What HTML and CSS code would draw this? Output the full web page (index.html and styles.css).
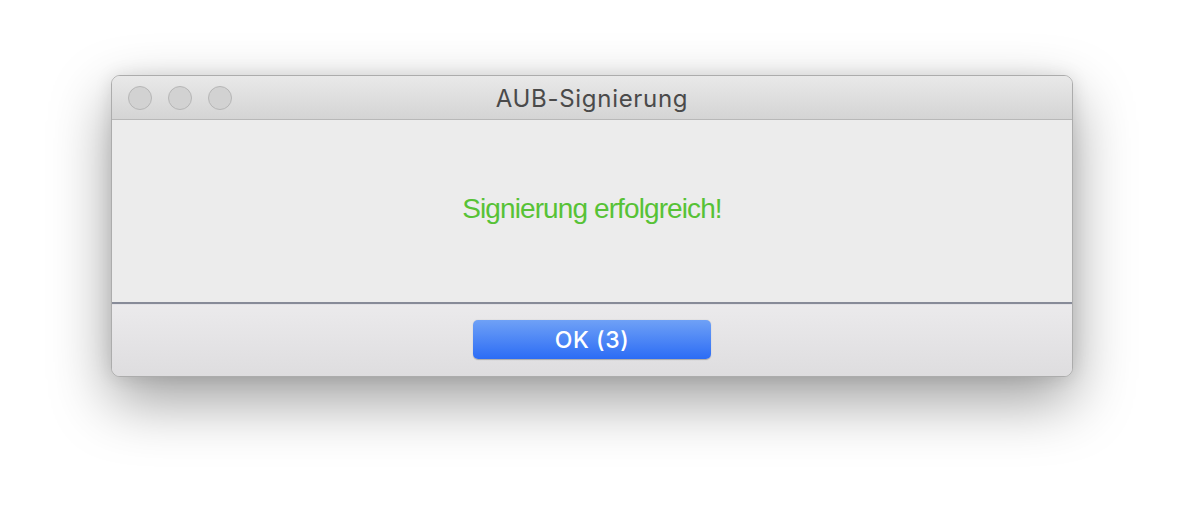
FILE: index.html
```html
<!DOCTYPE html>
<html lang="de">
<head>
<meta charset="utf-8">
<title>AUB-Signierung</title>
<link rel="stylesheet" href="styles.css">
</head>
<body>
<div class="stage">
  <div class="window">
    <div class="titlebar">
      <div class="lights">
        <span class="light"></span>
        <span class="light"></span>
        <span class="light"></span>
      </div>
      <div class="title">AUB-Signierung</div>
      <div class="spacer"></div>
    </div>
    <div class="content">
      <p class="message">Signierung erfolgreich!</p>
    </div>
    <div class="footer">
      <button class="ok">OK (3)</button>
    </div>
  </div>
</div>
</body>
</html>
```

FILE: styles.css
```css
html, body {
  margin: 0;
  padding: 0;
  background: #ffffff;
  width: 1184px;
  height: 524px;
  overflow: hidden;
}

.stage {
  display: flex;
  justify-content: center;
  padding-top: 75px;
}

.window {
  width: 962px;
  height: 302px;
  box-sizing: border-box;
  border: 1px solid #acacac;
  border-radius: 9px;
  overflow: hidden;
  display: flex;
  flex-direction: column;
  box-shadow: 0 24px 60px rgba(0, 0, 0, 0.38), 0 0 18px rgba(0, 0, 0, 0.10);
  background: #ececec;
}

.titlebar {
  height: 43px;
  flex: none;
  display: grid;
  grid-template-columns: 1fr auto 1fr;
  align-items: center;
  background: linear-gradient(#e9e9e9, #d4d4d4);
  border-bottom: 1px solid #b8b8b8;
}

.lights {
  display: flex;
  gap: 16px;
  padding-left: 16px;
}

.light {
  width: 22px;
  height: 22px;
  border-radius: 50%;
  background: #d2d2d2;
  border: 1px solid #b6b6b6;
}

.title {
  font-family: Inter, "Noto Sans", sans-serif;
  font-size: 24px;
  letter-spacing: 0.7px;
  color: #4a4a4a;
  padding-top: 1px;
}

.content {
  flex: 1;
  display: flex;
  align-items: center;
  justify-content: center;
  background: #ececec;
  border-bottom: 2px solid #878b98;
}

.message {
  margin: 0 0 4px 0;
  font-family: "Liberation Sans", Arial, sans-serif;
  font-size: 28px;
  letter-spacing: -0.9px;
  color: #57c236;
}

.footer {
  height: 72px;
  flex: none;
  box-sizing: border-box;
  border-top: 1px solid #e2e1e5;
  background: linear-gradient(#ebeaec, #dedddf);
  display: flex;
  justify-content: center;
  align-items: flex-start;
  padding-top: 15px;
}

.ok {
  width: 238px;
  height: 39px;
  border: none;
  border-radius: 5px;
  background: linear-gradient(#6fa1f6, #2c6cf5);
  box-shadow: 0 0.5px 1px rgba(0, 0, 0, 0.25);
  color: #ffffff;
  font-family: Inter, "Noto Sans", sans-serif;
  font-size: 23px;
  font-weight: 500;
  letter-spacing: 0.6px;
  padding: 0;
}
```
